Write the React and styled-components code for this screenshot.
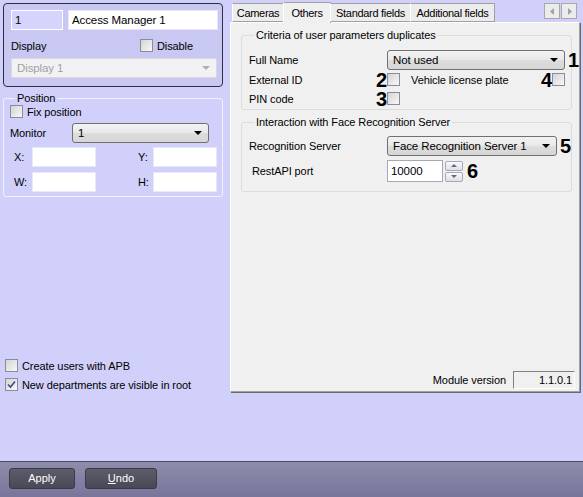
import styled, { createGlobalStyle } from "styled-components";

const Global = createGlobalStyle`
  html, body { margin: 0; padding: 0; }
  body {
    font-family: "Liberation Sans", Arial, sans-serif;
    font-size: 11px;
    letter-spacing: -0.1px;
    color: #000;
    background: #d0d0fa;
  }
`;

const Page = styled.div`
  width: 583px;
  height: 497px;
  display: flex;
  flex-direction: column;
  overflow: hidden;
`;

const Main = styled.div`
  flex: 1;
  display: flex;
  padding: 2px 3px 0 3px;
  gap: 7px;
`;

const LeftCol = styled.div`
  width: 220px;
  display: flex;
  flex-direction: column;
`;

const TopBox = styled.div`
  margin-top: 1px;
  height: 84px;
  box-sizing: border-box;
  border: 1px solid #2e2e44;
  border-radius: 4px;
  background: #c8c8f2;
  padding: 6px 5px 0 7px;
  display: flex;
  flex-direction: column;
`;

const Row = styled.div`
  display: flex;
  align-items: center;
  gap: ${(p) => p.$gap || 0}px;
  margin-top: ${(p) => p.$mt || 0}px;
  justify-content: ${(p) => p.$jc || "flex-start"};
`;

const TextBox = styled.div`
  box-sizing: border-box;
  flex: none;
  width: ${(p) => p.$w}px;
  height: ${(p) => p.$h || 20}px;
  background: ${(p) => p.$bg || "#fff"};
  border: 1px solid ${(p) => p.$bd || "#e8e8f8"};
  padding: 0 3px;
  display: flex;
  align-items: center;
  font-size: ${(p) => p.$fs || 11}px;
`;

const Label = styled.span`
  width: ${(p) => (p.$w ? p.$w + "px" : "auto")};
  padding-left: ${(p) => p.$pl || 0}px;
  white-space: nowrap;
`;

const Check = styled.span`
  box-sizing: border-box;
  width: 13px;
  height: 13px;
  flex: none;
  border: 1px solid #8c8c98;
  background: linear-gradient(135deg, #d4d4d4, #f8f8f8);
  display: inline-flex;
  align-items: center;
  justify-content: center;
`;

const CheckLabel = styled.label`
  display: flex;
  align-items: center;
  gap: 4px;
  white-space: nowrap;
  margin-right: ${(p) => p.$mr || 0}px;
`;

const Select = styled.div`
  box-sizing: border-box;
  flex: none;
  width: ${(p) => p.$w}px;
  height: ${(p) => p.$h || 20}px;
  display: flex;
  align-items: center;
  justify-content: space-between;
  padding: 0 6px 0 5px;
  border: 1px solid ${(p) => (p.$disabled ? "#d8d8d8" : "#707070")};
  border-radius: ${(p) => (p.$disabled ? 0 : 3)}px;
  background: ${(p) =>
    p.$disabled ? "#f2f2f4" : "linear-gradient(#f2f2f2, #e8e8e8 50%, #dddddd 51%, #d6d6d6)"};
  color: ${(p) => (p.$disabled ? "#a0a0a0" : "#000")};
  font-size: ${(p) => p.$fs || 11}px;
  grid-column: ${(p) => p.$span || "auto"};
`;

const Caret = styled.span`
  width: 0;
  height: 0;
  border-left: 4px solid transparent;
  border-right: 4px solid transparent;
  border-top: 4px solid ${(p) => p.$c || "#000"};
`;

const Group = styled.fieldset`
  margin: ${(p) => p.$m || 0};
  padding: ${(p) => p.$p || "0"};
  border: 1px solid ${(p) => p.$bd || "#f2f2ff"};
  border-radius: 3px;
  min-width: 0;
  legend {
    padding: 0 2px;
    margin-left: 5px;
  }
`;

const PosGrid = styled.div`
  display: grid;
  grid-template-columns: 18px 66px 1fr 15px 64px;
  row-gap: 5px;
  align-items: center;
  margin-top: 4px;
  margin-left: 4px;
`;

const Spacer = styled.div`
  flex: 1;
`;

const BottomChecks = styled.div`
  display: flex;
  flex-direction: column;
  gap: 6px;
  padding: 0 0 70px 2px;
`;

const RightCol = styled.div`
  width: 350px;
  display: flex;
  flex-direction: column;
`;

const TabStrip = styled.div`
  display: flex;
  align-items: flex-end;
  height: 20px;
  padding-left: 3px;
  position: relative;
  z-index: 1;
`;

const Tab = styled.div`
  box-sizing: border-box;
  width: ${(p) => p.$w}px;
  height: ${(p) => (p.$active ? 21 : 19)}px;
  margin-bottom: ${(p) => (p.$active ? -1 : 0)}px;
  background: ${(p) => (p.$active ? "#f0f0f0" : "#ececec")};
  border: 1px solid #a0a0a0;
  border-bottom: ${(p) => (p.$active ? "none" : "1px solid #a0a0a0")};
  border-left-color: #fff;
  margin-left: -1px;
  display: flex;
  align-items: center;
  justify-content: center;
  letter-spacing: -0.3px;
`;

const TabArrows = styled.div`
  margin-left: auto;
  margin-right: 3px;
  align-self: flex-start;
  margin-top: 1px;
  display: flex;
  gap: 1px;
`;

const ArrowBtn = styled.div`
  box-sizing: border-box;
  width: 16px;
  height: 16px;
  border: 1px solid #a8a8a8;
  background: #ececec;
  display: flex;
  align-items: center;
  justify-content: center;
`;

const Panel = styled.div`
  box-sizing: border-box;
  height: 370px;
  background: #f0f0f0;
  border: 1px solid #a0a0a0;
  border-left-color: #fff;
  border-top-color: #fff;
  box-shadow: 1px 1px 0 #6a6a6a;
  padding: 6px 7px 0 10px;
  display: flex;
  flex-direction: column;
`;

const CriteriaGrid = styled.div`
  display: grid;
  grid-template-columns: 124px 14px 13px 138px 14px 13px 14px;
  grid-auto-rows: 20px 19px 19px;
  align-items: center;
`;

const ServerGrid = styled.div`
  display: grid;
  grid-template-columns: 138px auto auto;
  justify-content: start;
  row-gap: 4px;
  align-items: center;
`;

const Num = styled.span`
  font-weight: bold;
  font-size: 20px;
  letter-spacing: 0;
  line-height: 16px;
  height: 16px;
  text-align: right;
  margin-left: ${(p) => p.$ml || 0}px;
`;

const Spin = styled.div`
  display: flex;
  align-items: center;
  gap: 2px;
`;

const SpinBtns = styled.div`
  display: flex;
  flex-direction: column;
  gap: 1px;
`;

const SpinBtn = styled.div`
  box-sizing: border-box;
  width: 18px;
  height: 10px;
  border: 1px solid #a8a8b8;
  border-radius: 2px;
  background: linear-gradient(#fafafa, #dedee8);
  display: flex;
  align-items: center;
  justify-content: center;
`;

const SmallTri = styled.span`
  width: 0;
  height: 0;
  border-left: 3px solid transparent;
  border-right: 3px solid transparent;
  ${(p) => (p.$up ? "border-bottom: 3px solid #5a6a8a;" : "border-top: 3px solid #5a6a8a;")}
`;

const VersionRow = styled.div`
  margin-top: auto;
  margin-bottom: 2px;
  margin-right: -3px;
  display: flex;
  justify-content: flex-end;
  align-items: center;
  gap: 7px;
`;

const VersionBox = styled.div`
  box-sizing: border-box;
  width: 62px;
  height: 18px;
  border: 1px solid #fff;
  border-left-color: #808080;
  border-top-color: #808080;
  display: flex;
  align-items: center;
  justify-content: flex-end;
  padding-right: 2px;
`;

const BottomBar = styled.div`
  height: 36px;
  box-sizing: border-box;
  border-top: 1px solid #4a4a5e;
  background: linear-gradient(#8e8dab, #77759a);
  display: flex;
  align-items: center;
  gap: 10px;
  padding-left: 9px;
  padding-bottom: 3px;
`;

const Button = styled.button`
  box-sizing: border-box;
  width: ${(p) => p.$w}px;
  height: 21px;
  border: 1px solid #3a3a48;
  border-radius: 3px;
  background: linear-gradient(#5c5c6c, #484856);
  color: #fff;
  font-family: "Liberation Sans", Arial, sans-serif;
  font-size: 11px;
  padding: 0;
`;

function CheckMark() {
  return (
    <svg width="9" height="9" viewBox="0 0 9 9">
      <path d="M1 4.5 L3.5 7 L8 1.5" fill="none" stroke="#3a4a8a" strokeWidth="1.6" />
    </svg>
  );
}

function TinyArrow({ dir }) {
  return (
    <svg width="5" height="7" viewBox="0 0 5 7">
      <path d={dir === "left" ? "M4 0 L0 3.5 L4 7 Z" : "M1 0 L5 3.5 L1 7 Z"} fill="#a0a0b0" />
    </svg>
  );
}

export default function App() {
  return (
    <Page>
      <Global />
      <Main>
        <LeftCol>
          <TopBox>
            <Row $gap={5}>
              <TextBox $w={52} $bg="#d4d4fc" $bd="#fff" $fs={11.5}>1</TextBox>
              <TextBox $w={150} $fs={11.5}>Access Manager 1</TextBox>
            </Row>
            <Row $mt={9} $jc="space-between">
              <Label>Display</Label>
              <CheckLabel $mr={24}>
                <Check />
                Disable
              </CheckLabel>
            </Row>
            <Row $mt={6}>
              <Select $w={206} $h={20} $fs={11.5} $disabled>
                Display 1
                <Caret $c="#b0b0b0" />
              </Select>
            </Row>
          </TopBox>
          <Group $m="5px 0 0 0" $p="1px 5px 4px 6px">
            <legend>Position</legend>
            <CheckLabel>
              <Check />
              Fix position
            </CheckLabel>
            <Row $mt={5}>
              <Label $w={62}>Monitor</Label>
              <Select $w={137} $h={20} $fs={11.5}>
                1
                <Caret />
              </Select>
            </Row>
            <PosGrid>
              <Label>X:</Label>
              <TextBox $w={64} />
              <span />
              <Label>Y:</Label>
              <TextBox $w={64} />
              <Label>W:</Label>
              <TextBox $w={64} />
              <span />
              <Label>H:</Label>
              <TextBox $w={64} />
            </PosGrid>
          </Group>
          <Spacer />
          <BottomChecks>
            <CheckLabel>
              <Check />
              Create users with APB
            </CheckLabel>
            <CheckLabel>
              <Check>
                <CheckMark />
              </Check>
              New departments are visible in root
            </CheckLabel>
          </BottomChecks>
        </LeftCol>
        <RightCol>
          <TabStrip>
            <Tab $w={52}>Cameras</Tab>
            <Tab $w={48} $active>Others</Tab>
            <Tab $w={81}>Standard fields</Tab>
            <Tab $w={85}>Additional fields</Tab>
            <TabArrows>
              <ArrowBtn>
                <TinyArrow dir="left" />
              </ArrowBtn>
              <ArrowBtn>
                <TinyArrow dir="right" />
              </ArrowBtn>
            </TabArrows>
          </TabStrip>
          <Panel>
            <Group $bd="#dcdcdc" $p="9px 0 1px 7px">
              <legend>Criteria of user parameters duplicates</legend>
              <CriteriaGrid>
                <Label>Full Name</Label>
                <span />
                <Select $w={178} $h={20} $fs={11.5} $span="3 / 7">
                  Not used
                  <Caret />
                </Select>
                <Num>1</Num>
                <Label>External ID</Label>
                <Num>2</Num>
                <Check />
                <Label $pl={11}>Vehicle license plate</Label>
                <Num>4</Num>
                <Check />
                <span />
                <Label>PIN code</Label>
                <Num>3</Num>
                <Check />
              </CriteriaGrid>
            </Group>
            <Group $bd="#dcdcdc" $m="6px 0 0 0" $p="8px 0 9px 7px">
              <legend>Interaction with Face Recognition Server</legend>
              <ServerGrid>
                <Label>Recognition Server</Label>
                <Select $w={170} $h={20} $fs={11.5}>
                  Face Recognition Server 1
                  <Caret />
                </Select>
                <Num $ml={3}>5</Num>
                <Label $pl={3}>RestAPI port</Label>
                <Spin>
                  <TextBox $w={56} $h={22} $bd="#a8a8b8" $fs={11.5}>10000</TextBox>
                  <SpinBtns>
                    <SpinBtn>
                      <SmallTri $up />
                    </SpinBtn>
                    <SpinBtn>
                      <SmallTri />
                    </SpinBtn>
                  </SpinBtns>
                  <Num $ml={2}>6</Num>
                </Spin>
              </ServerGrid>
            </Group>
            <VersionRow>
              <Label>Module version</Label>
              <VersionBox>1.1.0.1</VersionBox>
            </VersionRow>
          </Panel>
        </RightCol>
      </Main>
      <BottomBar>
        <Button $w={66}>Apply</Button>
        <Button $w={72}>
          <u>U</u>ndo
        </Button>
      </BottomBar>
    </Page>
  );
}
